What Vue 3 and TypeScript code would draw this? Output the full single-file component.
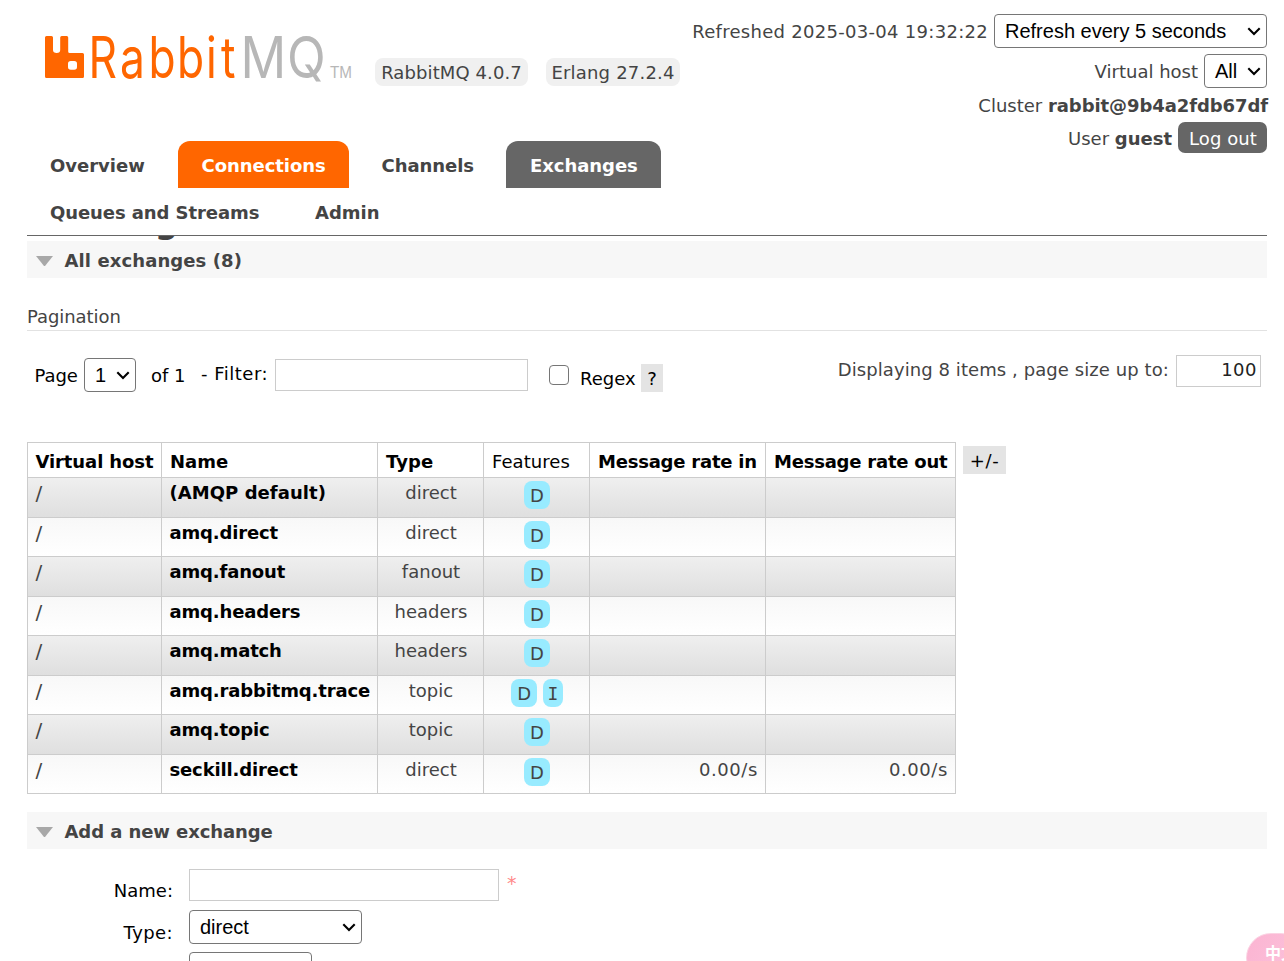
<script setup lang="ts">
interface Tab {
  label: string
  cls: string
}
interface Exchange {
  name: string
  type: string
  features: string[]
  rate: string
}

const tabRows: Tab[][] = [
  [
    { label: 'Overview', cls: 'overview' },
    { label: 'Connections', cls: 'connections' },
    { label: 'Channels', cls: 'channels' },
    { label: 'Exchanges', cls: 'exchanges' },
  ],
  [
    { label: 'Queues and Streams', cls: 'queues' },
    { label: 'Admin', cls: 'admin' },
  ],
]

const exchanges: Exchange[] = [
  { name: '(AMQP default)', type: 'direct', features: ['D'], rate: '' },
  { name: 'amq.direct', type: 'direct', features: ['D'], rate: '' },
  { name: 'amq.fanout', type: 'fanout', features: ['D'], rate: '' },
  { name: 'amq.headers', type: 'headers', features: ['D'], rate: '' },
  { name: 'amq.match', type: 'headers', features: ['D'], rate: '' },
  { name: 'amq.rabbitmq.trace', type: 'topic', features: ['D', 'I'], rate: '' },
  { name: 'amq.topic', type: 'topic', features: ['D'], rate: '' },
  { name: 'seckill.direct', type: 'direct', features: ['D'], rate: '0.00/s' },
]
</script>

<template>
  <div class="page">
    <header class="header">
      <div class="brand-col">
        <div class="brand">
          <svg class="logo" width="310" height="70" viewBox="44 20 310 70">
            <path
              fill="#ff6600"
              fill-rule="evenodd"
              d="M46.5 36H51.5Q53 36 53 37.5V50Q53 53 56.7 53Q60.2 53 60.2 50V37.5Q60.2 36 61.7 36H66.7Q68.2 36 68.2 37.5V51.5Q68.2 53 69.7 53H82.5Q84 53 84 54.5V76.5Q84 78 82.5 78H46.5Q45 78 45 76.5V37.5Q45 36 46.5 36ZM70.8 61Q68 61 68 63.8V67Q68 69.8 70.8 69.8H74.2Q77 69.8 77 67V63.8Q77 61 74.2 61Z"
            />
            <text class="word orange" transform="scale(0.77 1)" x="114.8 156 192.8 229.8 267.5 287" y="78">Rabbit</text>
            <text class="word grey" transform="scale(0.88 1)" x="273.2 326.2" y="78">MQ</text>
            <text class="tm" x="330" y="78" textLength="22" lengthAdjust="spacingAndGlyphs">TM</text>
          </svg>
          <span class="version v1">RabbitMQ 4.0.7</span>
          <span class="version v2">Erlang 27.2.4</span>
        </div>
        <nav>
          <div v-for="(row, i) in tabRows" :key="i" class="tabs">
            <a v-for="tab in row" :key="tab.label" class="tab" :class="tab.cls"><span>{{ tab.label }}</span></a>
          </div>
        </nav>
      </div>
      <div class="status">
        <div class="status-row">
          <span class="t-ref">Refreshed 2025-03-04 19:32:22</span>
          <div class="select s-refresh">Refresh every 5 seconds<svg width="14" height="9" viewBox="0 0 14 9"><path d="M1.3 1.3L7 7L12.7 1.3" /></svg></div>
        </div>
        <div class="status-row second">
          <span class="t-vh">Virtual host</span>
          <div class="select s-all">All<svg width="14" height="9" viewBox="0 0 14 9"><path d="M1.3 1.3L7 7L12.7 1.3" /></svg></div>
        </div>
        <div class="status-row cluster"><span>Cluster <b>rabbit@9b4a2fdb67df</b></span></div>
        <div class="status-row user"><span>User <b>guest</b></span><button class="logout">Log out</button></div>
      </div>
    </header>

    <main>
      <div class="title-clip"><h1>Exchanges</h1></div>
      <h2 class="section all"><i class="tri"></i><span>All exchanges (8)</span></h2>
      <h3 class="pag-title"><span>Pagination</span></h3>

      <div class="paging">
        <span class="p-page">Page</span>
        <div class="select s-page">1<svg width="14" height="9" viewBox="0 0 14 9"><path d="M1.3 1.3L7 7L12.7 1.3" /></svg></div>
        <span class="p-of">of 1</span>
        <span class="p-filter">- Filter:</span>
        <div class="input i-filter"></div>
        <div class="check"></div>
        <span class="p-regex">Regex</span>
        <span class="chip help">?</span>
        <span class="p-disp">Displaying 8 items , page size up to:</span>
        <div class="input i-size">100</div>
      </div>

      <div class="table-row">
        <table>
          <colgroup><col class="c1" /><col class="c2" /><col class="c3" /><col class="c4" /><col class="c5" /><col class="c6" /></colgroup>
          <thead>
            <tr>
              <th>Virtual host</th><th class="loose">Name</th><th class="loose">Type</th><th class="plain">Features</th><th>Message rate in</th><th>Message rate out</th>
            </tr>
          </thead>
          <tbody>
            <tr v-for="x in exchanges" :key="x.name">
              <td class="vhost">/</td>
              <td class="name" :class="{ loose: x.name.startsWith('(') }">{{ x.name }}</td>
              <td class="mid">{{ x.type }}</td>
              <td class="feat"><div class="badges"><span v-for="f in x.features" :key="f" class="badge" :class="{ internal: f === 'I' }">{{ f }}</span></div></td>
              <td class="num">{{ x.rate }}</td>
              <td class="num">{{ x.rate }}</td>
            </tr>
          </tbody>
        </table>
        <span class="chip toggle">+/-</span>
      </div>

      <h2 class="section add"><i class="tri"></i><span>Add a new exchange</span></h2>
      <div class="form">
        <div class="f-row">
          <label>Name:</label><div class="input i-name"></div><span class="star">*</span>
        </div>
        <div class="f-row">
          <label class="l-type">Type:</label><div class="select s-type">direct<svg width="14" height="9" viewBox="0 0 14 9"><path d="M1.3 1.3L7 7L12.7 1.3" /></svg></div>
        </div>
        <div class="f-row"><label></label><div class="select s-next"></div></div>
      </div>
    </main>
    <div class="float">中文</div>
  </div>
</template>

<style>
body {
  margin: 0;
  background: #fff;
}
</style>

<style scoped>
.page {
  position: relative;
  width: 1284px;
  height: 961px;
  overflow: hidden;
  box-sizing: border-box;
  padding: 0 17px 0 27px;
  background: #fff;
  color: #444;
  font: 18px/24px Verdana, "DejaVu Sans", sans-serif;
  white-space: nowrap;
}
.page *,
.page *::before {
  box-sizing: border-box;
}
.header {
  display: flex;
  justify-content: space-between;
  height: 236px;
  border-bottom: 1px solid #666;
}
.brand-col {
  width: 640px;
}
.brand {
  display: flex;
  height: 141px;
  padding: 20px 0 0 17px;
}
.logo {
  display: block;
  flex: none;
}
.word {
  font-family: Inter, sans-serif;
  font-size: 57.5px;
}
.orange {
  fill: #f60;
}
.grey {
  fill: #b7b7b7;
}
.tm {
  font: 16px "Liberation Sans", Arial, sans-serif;
  fill: #b7b7b7;
}
.version {
  flex: none;
  height: 28px;
  margin: 38px 0 0 21px;
  border-radius: 8px;
  background: #f0f0f0;
  line-height: 29px;
  text-align: center;
  letter-spacing: 0.1px;
}
.v1 {
  width: 153px;
}
.v2 {
  width: 134px;
  margin-left: 18px;
  letter-spacing: 0.2px;
}
.tabs {
  display: flex;
  gap: 8px;
  height: 47px;
}
.tab {
  display: block;
  padding-left: 23px;
  line-height: 49px;
  font-weight: bold;
  border-radius: 12px 12px 0 0;
}
.overview {
  width: 143px;
}
.connections {
  width: 171px;
  padding-left: 23.5px;
  background: #f60;
  color: #fff;
  letter-spacing: -0.05px;
}
.channels {
  width: 141px;
  padding-left: 24.5px;
  letter-spacing: -0.05px;
}
.exchanges {
  width: 155px;
  padding-left: 24px;
  background: #666;
  color: #fff;
  letter-spacing: -0.05px;
}
.queues {
  width: 257px;
  letter-spacing: -0.08px;
}
.status {
  padding-top: 14px;
}
.status-row {
  display: flex;
  justify-content: flex-end;
  align-items: center;
  gap: 6px;
  height: 34px;
}
.status-row > span {
  padding-top: 2px;
}
.t-ref {
  letter-spacing: 0.29px;
}
.cluster b {
  letter-spacing: -0.08px;
}
.cluster > span {
  margin-right: -1px;
}
.second {
  margin-top: 6px;
}
.user {
  height: 31px;
}
.logout {
  width: 89px;
  height: 31px;
  padding: 2px 0 0 1px;
  border: 0;
  border-radius: 7px;
  background: #666;
  color: #fff;
  font: inherit;
  letter-spacing: 0.1px;
}
.select {
  display: flex;
  align-items: center;
  justify-content: space-between;
  height: 34px;
  padding: 0 5px 0 10px;
  border: 1px solid #767676;
  border-radius: 4px;
  background: #fff;
  color: #000;
  font: 20px/32px "Liberation Sans", Arial, sans-serif;
}
.select svg {
  fill: none;
  stroke: #000;
  stroke-width: 2.1;
}
.s-refresh {
  width: 273px;
}
.s-all {
  width: 63px;
}
.title-clip {
  display: flex;
  align-items: flex-end;
  height: 5px;
  overflow: hidden;
}
h1 {
  margin: 0;
  padding-bottom: 3px;
  font-size: 33px;
  line-height: 33px;
  letter-spacing: -0.8px;
}
.section {
  display: flex;
  align-items: center;
  height: 37px;
  margin: 0;
  padding: 2px 0 0 9px;
  background: #f7f7f7;
  font-size: 18px;
  line-height: 35px;
}
.all {
  letter-spacing: 0.1px;
}
.add {
  letter-spacing: -0.08px;
}
.tri {
  width: 17px;
  margin-right: 11.5px;
  border: 8.5px solid transparent;
  border-top: 10px solid #a8a8a8;
  border-bottom: 0;
}
.pag-title {
  height: 53px;
  margin: 0;
  padding-top: 27px;
  border-bottom: 1px solid #e2e2e2;
  font-size: 18px;
  font-weight: normal;
  letter-spacing: -0.06px;
}
.paging {
  display: flex;
  align-items: flex-start;
  height: 111px;
  padding: 24px 6px 0 7.5px;
  color: #000;
}
.p-page {
  width: 49.5px;
  padding-top: 9px;
  letter-spacing: -0.1px;
}
.s-page {
  width: 52px;
  margin-top: 3px;
}
.p-of {
  width: 50px;
  margin-left: 15px;
  padding-top: 9px;
}
.p-filter {
  width: 74px;
  padding-top: 7px;
  letter-spacing: 0.5px;
}
.input {
  height: 32px;
  border: 1px solid #ccc;
  background: #fff;
}
.i-filter {
  width: 253px;
  margin-top: 4px;
}
.check {
  width: 20px;
  height: 20px;
  margin: 10px 11px 0 21px;
  border: 1.5px solid #767676;
  border-radius: 4px;
}
.p-regex {
  width: 61px;
  padding-top: 12px;
}
.chip {
  height: 28px;
  background: #e4e4e4;
  color: #000;
  line-height: 29px;
  text-align: center;
}
.help {
  width: 22px;
  margin-top: 9px;
}
.p-disp {
  margin-left: auto;
  padding-top: 3px;
  color: #444;
  letter-spacing: 0.08px;
}
.i-size {
  width: 85px;
  margin-left: 7px;
  padding-right: 3px;
  color: #222;
  font-size: 18px;
  line-height: 28px;
  letter-spacing: 0.5px;
  text-align: right;
}
.table-row {
  display: flex;
  height: 370px;
}
table {
  width: 929px;
  height: 352px;
  table-layout: fixed;
  border-collapse: separate;
  border-spacing: 0;
  border: solid #ccc;
  border-width: 1px 0 0 1px;
}
.c1 { width: 134px; }
.c2 { width: 216px; }
.c3 { width: 106px; }
.c4 { width: 106px; }
.c5 { width: 176px; }
.c6 { width: 190px; }
th,
td {
  padding: 0 0 0 8px;
  border: solid #ccc;
  border-width: 0 1px 1px 0;
  text-align: left;
}
th {
  height: 35px;
  padding-top: 3px;
  line-height: 31px;
  color: #000;
  letter-spacing: -0.22px;
}
th:first-child {
  padding-left: 7.5px;
  letter-spacing: -0.1px;
}
th.plain {
  font-weight: normal;
  letter-spacing: 0.06px;
}
td {
  height: 39px;
  padding-top: 3px;
  vertical-align: top;
  background: linear-gradient(#f8f8f8, #fff);
}
tbody tr:nth-child(odd) td {
  height: 40px;
  background: linear-gradient(#efefef, #dfdfdf);
}
.vhost {
  padding-left: 7.5px;
  font-size: 20px;
}
.name {
  padding-left: 7.5px;
  color: #000;
  font-weight: bold;
  letter-spacing: -0.15px;
}
th.loose,
td.loose {
  letter-spacing: 0.05px;
}
.mid,
.feat {
  padding-left: 1px;
  text-align: center;
}
.num {
  padding-right: 7px;
  letter-spacing: 0.6px;
  text-align: right;
}
.badges {
  display: flex;
  justify-content: center;
  gap: 6px;
}
.badge {
  height: 28px;
  padding: 0 6px;
  border-radius: 8px;
  background: #98ebff;
  line-height: 29px;
}
.internal {
  padding: 0 4.5px;
  font-family: Verdana, "DejaVu Sans Mono", monospace;
}
.toggle {
  width: 43px;
  margin: 4px 0 0 7px;
  letter-spacing: 0.7px;
}
.form {
  padding-top: 20px;
}
.f-row {
  display: flex;
  height: 41px;
}
.f-row + .f-row {
  height: 42px;
}
.f-row label {
  width: 146px;
  margin-right: 16px;
  padding-top: 10px;
  text-align: right;
  color: #000;
}
.f-row .l-type {
  padding-top: 11px;
  letter-spacing: 0.4px;
}
.i-name {
  width: 310px;
}
.star {
  margin-left: 8px;
  padding-top: 2px;
  color: #ff8a8a;
  font-size: 19px;
}
.s-type {
  width: 173px;
}
.s-next {
  width: 123px;
}
.float {
  position: absolute;
  left: 1246px;
  top: 933px;
  width: 60px;
  height: 50px;
  padding-left: 18px;
  border-radius: 25px;
  border: 1px solid #fbd3e3;
  background: linear-gradient(120deg, #fbb4d2, #fcc4dc);
  color: #fff;
  font: bold 16px/36px "Noto Sans CJK SC", sans-serif;
}
</style>
